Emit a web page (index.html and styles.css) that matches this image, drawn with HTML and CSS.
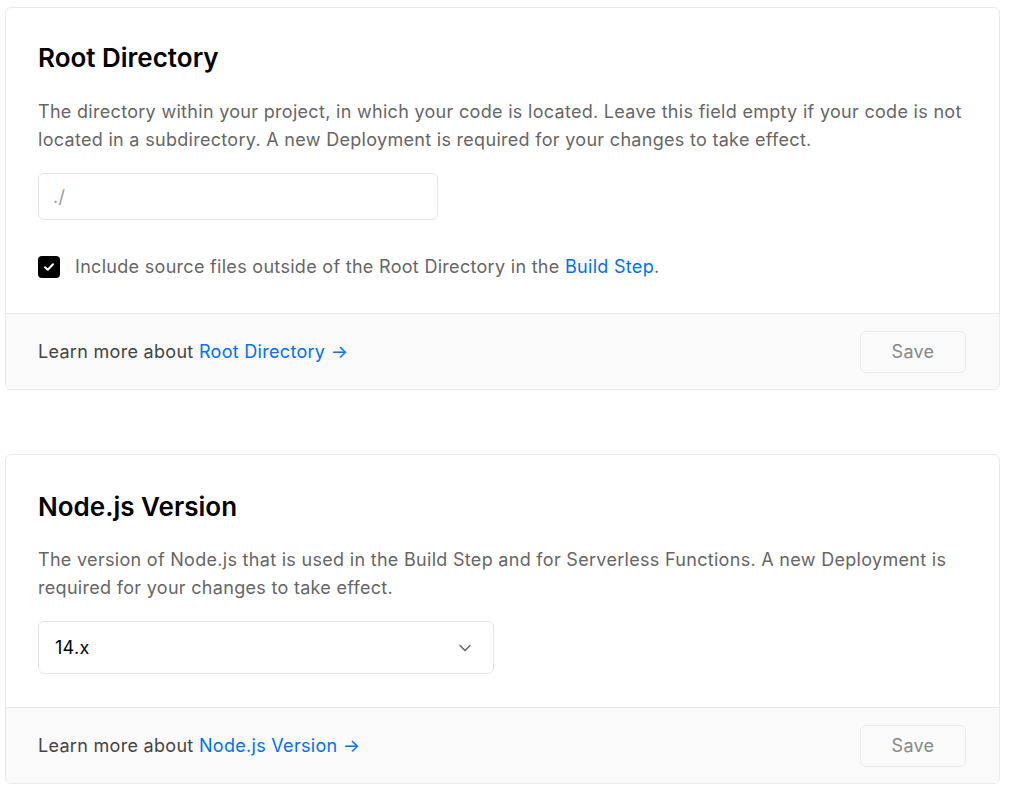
FILE: index.html
```html
<!DOCTYPE html>
<html>
<head>
<meta charset="utf-8">
<link rel="stylesheet" href="styles.css">
</head>
<body>
<div class="page">
  <section class="card">
    <div class="card-body">
      <h2 class="card-title">Root Directory</h2>
      <p class="card-desc">The directory within your project, in which your code is located. Leave this field empty if your code is not located in a subdirectory. A new Deployment is required for your changes to take effect.</p>
      <div class="input-wrap"><input class="text-input" type="text" placeholder="./"></div>
      <label class="check-row">
        <span class="checkbox">
          <svg width="14" height="14" viewBox="0 0 14 14"><path d="M3 7.3 L5.8 9.8 L11 4.3" fill="none" stroke="#fff" stroke-width="2" stroke-linecap="round" stroke-linejoin="round"/></svg>
        </span>
        <span class="check-text">Include source files outside of the Root Directory in the <a class="link" href="#">Build Step</a>.</span>
      </label>
    </div>
    <div class="card-footer">
      <span class="footer-text">Learn more about <a class="link" href="#">Root Directory →</a></span>
      <button class="save-btn" type="button">Save</button>
    </div>
  </section>

  <section class="card">
    <div class="card-body card-body-select">
      <h2 class="card-title">Node.js Version</h2>
      <p class="card-desc">The version of Node.js that is used in the Build Step and for Serverless Functions. A new Deployment is required for your changes to take effect.</p>
      <div class="select">
        <span class="select-value">14.x</span>
        <svg class="chevron" width="16" height="16" viewBox="0 0 16 16"><path d="M3 5.5 L8 10.5 L13 5.5" fill="none" stroke="#666" stroke-width="1.5" stroke-linecap="round" stroke-linejoin="round"/></svg>
      </div>
    </div>
    <div class="card-footer">
      <span class="footer-text">Learn more about <a class="link" href="#">Node.js Version →</a></span>
      <button class="save-btn" type="button">Save</button>
    </div>
  </section>
</div>
</body>
</html>
```

FILE: styles.css
```css
* { box-sizing: border-box; }
html, body { margin: 0; padding: 0; background: #fff; }
body {
  font-family: Inter, "Noto Sans", sans-serif;
  color: #000;
  -webkit-font-smoothing: antialiased;
}
.page {
  padding: 7px 10px 0 5px;
  display: flex;
  flex-direction: column;
  gap: 64px;
}
.card {
  border: 1px solid #eaeaea;
  border-radius: 6px;
  overflow: hidden;
  background: #fff;
}
.card-body {
  padding: 32px 32px 34px 32px;
}
.card-body-select { padding-top: 34px; padding-bottom: 33px; }
.card-title {
  margin: 0;
  font-size: 26px;
  font-weight: 600;
  line-height: 36px;
  letter-spacing: 0;
}
.card-desc {
  margin: 22px 0 0 0;
  font-size: 18px;
  line-height: 28px;
  letter-spacing: 0.3px;
  color: #666;
}
.card-body-select .card-desc { margin-top: 21px; }
.input-wrap { margin-top: 19px; }
.text-input {
  display: block;
  width: 400px;
  height: 47px;
  border: 1px solid #e5e5e5;
  border-radius: 6px;
  padding: 0 14px;
  font-family: inherit;
  font-size: 18px;
  letter-spacing: 0.3px;
  color: #000;
  outline: none;
}
.text-input::placeholder { color: #999; }
.check-row {
  display: flex;
  align-items: center;
  gap: 15px;
  margin-top: 35px;
}
.checkbox {
  width: 22px;
  height: 22px;
  border-radius: 4px;
  background: #000;
  display: flex;
  align-items: center;
  justify-content: center;
  flex-shrink: 0;
}
.check-text {
  font-size: 18px;
  line-height: 24px;
  letter-spacing: 0.3px;
  color: #666;
}
.link { color: #0070f3; text-decoration: none; }
.select {
  margin-top: 19px;
  width: 456px;
  height: 53px;
  border: 1px solid #e5e5e5;
  border-radius: 6px;
  display: flex;
  align-items: center;
  justify-content: space-between;
  padding: 0 20px 0 16px;
}
.select-value { font-size: 18px; letter-spacing: 0.3px; color: #000; }
.card-footer {
  background: #fafafa;
  border-top: 1px solid #eaeaea;
  height: 76px;
  display: flex;
  align-items: center;
  justify-content: space-between;
  padding: 0 33px 0 32px;
}
.footer-text {
  font-size: 18px;
  letter-spacing: 0.3px;
  color: #444;
}
.save-btn {
  width: 106px;
  height: 42px;
  border: 1px solid #eaeaea;
  border-radius: 6px;
  background: #fafafa;
  color: #888;
  font-family: inherit;
  font-size: 18px;
  letter-spacing: 0.3px;
}
```
